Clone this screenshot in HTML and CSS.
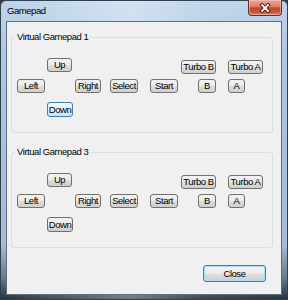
FILE: index.html
```html
<!DOCTYPE html>
<html lang="en">
<head>
 <meta charset="UTF-8">
 <title>Gamepad</title>
 <link rel="stylesheet" href="styles.css">
</head>
<body>
 <div class="window">
  <div class="titlebar">
   <span class="title">Gamepad</span>
   <button class="close-x">
    <svg width="12" height="10" viewBox="0 0 12 10">
     <path d="M3 2 L9 8 M9 2 L3 8" stroke="#4a1a14" stroke-width="3.6" stroke-linecap="square"/>
     <path d="M3 2 L9 8 M9 2 L3 8" stroke="#ffffff" stroke-width="1.8" stroke-linecap="square"/>
    </svg>
   </button>
  </div>

  <div class="client">
   <fieldset class="group">
    <legend>Virtual Gamepad 1</legend>
    <div class="row row-top">
     <button class="btn up">Up</button>
     <button class="btn turbo turbo-b">Turbo B</button>
     <button class="btn turbo turbo-a">Turbo A</button>
    </div>
    <div class="row row-mid">
     <button class="btn left">Left</button>
     <button class="btn right">Right</button>
     <button class="btn select">Select</button>
     <button class="btn start">Start</button>
     <button class="btn b">B</button>
     <button class="btn a">A</button>
    </div>
    <div class="row row-bottom">
     <button class="btn down hot">Down</button>
    </div>
   </fieldset>

   <fieldset class="group group-second">
    <legend>Virtual Gamepad 3</legend>
    <div class="row row-top">
     <button class="btn up">Up</button>
     <button class="btn turbo turbo-b">Turbo B</button>
     <button class="btn turbo turbo-a">Turbo A</button>
    </div>
    <div class="row row-mid">
     <button class="btn left">Left</button>
     <button class="btn right">Right</button>
     <button class="btn select">Select</button>
     <button class="btn start">Start</button>
     <button class="btn b">B</button>
     <button class="btn a">A</button>
    </div>
    <div class="row row-bottom">
     <button class="btn down">Down</button>
    </div>
   </fieldset>

   <div class="footer">
    <button class="btn close default">Close</button>
   </div>
  </div>
 </div>
</body>
</html>
```

FILE: styles.css
```css
html, body {
    margin: 0;
    padding: 0;
    background: #2c3a48;
}

.window {
    box-sizing: border-box;
    width: 288px;
    height: 300px;
    padding: 0 5px 4px 5px;
    border: 1px solid #33414f;
    border-radius: 6px 6px 0 0;
    background:
        linear-gradient(to right, rgba(255,255,255,0.0) 0%, rgba(255,255,255,0.35) 45%, rgba(255,255,255,0.1) 70%, rgba(255,255,255,0) 100%),
        linear-gradient(to bottom, #bcd3ea 0%, #aec7e1 20%, #a3bbd4 82%, #66788b 93%, #27323e 100%);
    font-family: "Liberation Sans", Arial, sans-serif;
    font-size: 9.5px;
    letter-spacing: -0.45px;
}

.titlebar {
    display: flex;
    justify-content: space-between;
    align-items: flex-start;
    height: 20px;
}

.title {
    padding: 4px 0 0 1px;
    line-height: 12px;
    color: #000;
}

.close-x {
    display: flex;
    align-items: center;
    justify-content: center;
    width: 34px;
    height: 16px;
    margin-top: -1px;
    padding: 0;
    border: 1px solid #6b2c24;
    border-top: none;
    border-radius: 0 0 4px 4px;
    background: linear-gradient(to bottom, #e9a795 0%, #dc7d68 45%, #c6452e 52%, #c9523b 80%, #d8826c 100%);
    box-shadow: inset 0 0 0 1px rgba(255,220,210,0.45);
}

.client {
    box-sizing: border-box;
    height: 274px;
    padding-top: 9px;
    border: 1px solid #5e6f80;
    background: #f0f0f0;
}

.group {
    margin: 0 8px 0 4px;
    padding: 15px 0 15px 0;
    border: 1px solid #d5dfe5;
    border-radius: 3px;
}

.group-second {
    margin-top: 13px;
}

.group legend {
    margin-left: 3px;
    padding: 0 2px;
    line-height: 12px;
    color: #000;
}

.row {
    display: flex;
    align-items: flex-start;
}

.row-mid {
    margin-top: 5px;
}

.row-bottom {
    margin-top: 9px;
}

.btn {
    box-sizing: border-box;
    height: 14px;
    padding: 0;
    border: 1px solid #707070;
    border-radius: 3px;
    background: linear-gradient(to bottom, #f2f2f2 0%, #ebebeb 50%, #dddddd 51%, #cfcfcf 100%);
    font-family: inherit;
    font-size: 9.5px;
    letter-spacing: -0.45px;
    line-height: 12px;
    white-space: nowrap;
    color: #000;
}

.turbo {
    margin-top: 2px;
    width: 35px;
}

.up { margin-left: 35px; width: 25px; }
.turbo-b { margin-left: 109px; }
.turbo-a { margin-left: 12px; }

.left { margin-left: 5px; width: 28px; }
.right { margin-left: 30px; width: 26px; }
.select { margin-left: 9px; width: 28px; }
.start { margin-left: 12px; width: 28px; }
.b { margin-left: 20px; width: 18px; }
.a { margin-left: 12px; width: 17px; }

.down { margin-left: 35px; width: 26px; height: 15px; }

.btn.hot {
    border-color: #3c7fb1;
    background: linear-gradient(to bottom, #f1f9fe 0%, #e6f5fd 50%, #d3eefc 51%, #c5e7f9 100%);
}

.footer {
    display: flex;
    justify-content: flex-end;
    margin-top: 17px;
    padding-right: 15px;
}

.btn.close {
    width: 63px;
    height: 17px;
}

.btn.default {
    border-color: #3c7fb1;
    box-shadow: inset 0 0 0 1px #a9dcf7;
}
```
